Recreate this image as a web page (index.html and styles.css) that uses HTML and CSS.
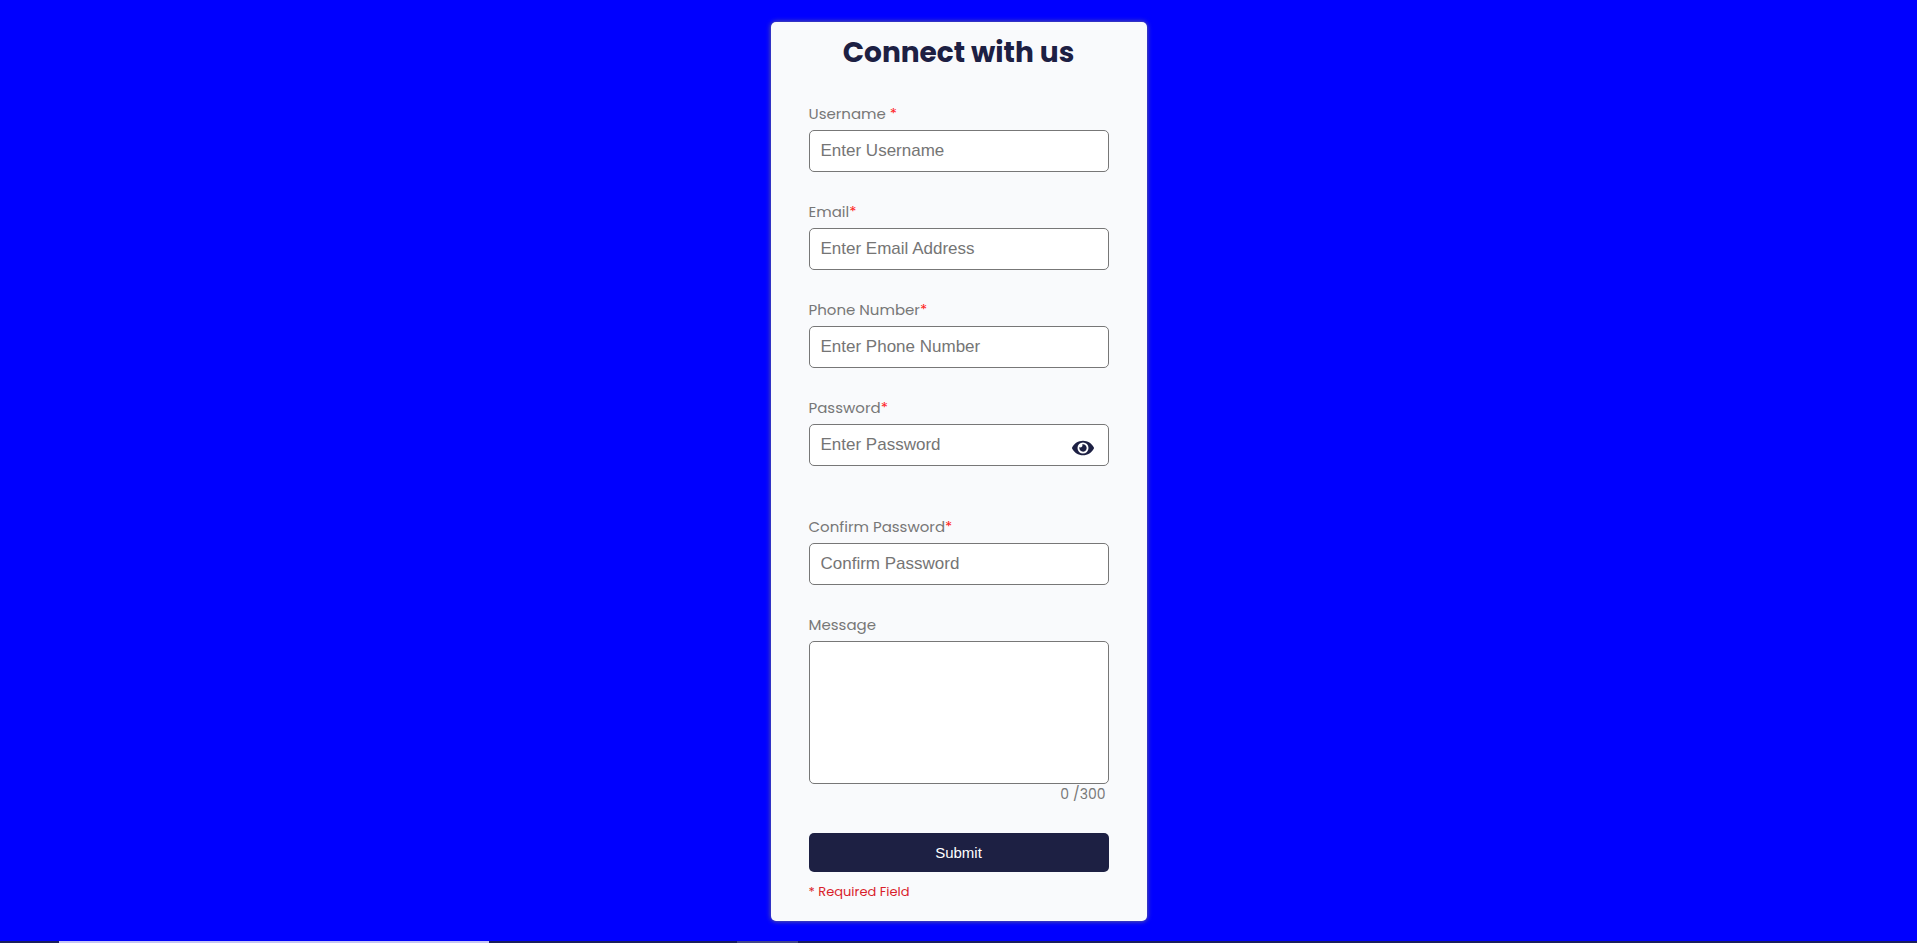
FILE: index.html
```html
<!DOCTYPE html>
<html lang="en">
<head>
  <meta charset="utf-8">
  <meta name="viewport" content="width=device-width, initial-scale=1">
  <title>Connect with us</title>
  <link rel="stylesheet" href="styles.css">
</head>
<body>
  <main class="page">
    <form class="card">
      <h1 class="title">Connect with us</h1>
      <div class="field">
        <label class="label" for="username">Username <span class="star">*</span></label>
        <input class="input" id="username" type="text" placeholder="Enter Username">
      </div>
      <div class="field">
        <label class="label" for="email">Email<span class="star">*</span></label>
        <input class="input" id="email" type="email" placeholder="Enter Email Address">
      </div>
      <div class="field">
        <label class="label" for="phone">Phone Number<span class="star">*</span></label>
        <input class="input" id="phone" type="tel" placeholder="Enter Phone Number">
      </div>
      <div class="field field-password">
        <label class="label" for="password">Password<span class="star">*</span></label>
        <div class="password-box">
          <input class="input" id="password" type="password" placeholder="Enter Password">
          <button class="toggle" type="button" aria-label="Show password">
            <svg class="eye" viewBox="0 0 576 512" aria-hidden="true"><path fill="currentColor" d="M572.52 241.4C518.29 135.59 410.93 64 288 64S57.68 135.64 3.48 241.41a32.35 32.35 0 0 0 0 29.19C57.71 376.41 165.07 448 288 448s230.32-71.64 284.52-177.41a32.35 32.35 0 0 0 0-29.19zM288 400a144 144 0 1 1 144-144 143.93 143.93 0 0 1-144 144zm0-240a95.31 95.31 0 0 0-25.31 3.79 47.85 47.85 0 0 1-66.9 66.9A95.78 95.78 0 1 0 288 160z"/></svg>
          </button>
        </div>
      </div>
      <div class="field">
        <label class="label" for="confirm">Confirm Password<span class="star">*</span></label>
        <input class="input" id="confirm" type="password" placeholder="Confirm Password">
      </div>
      <div class="field field-message">
        <label class="label" for="message">Message</label>
        <textarea class="input message" id="message" maxlength="300"></textarea>
        <p class="counter"><span>0</span><span>/300</span></p>
      </div>
      <button class="submit" type="submit">Submit</button>
      <p class="required">* Required Field</p>
    </form>
  </main>
  <footer class="taskbar">
    <span class="task task-active"></span>
    <span class="task task-open"></span>
  </footer>
</body>
</html>
```
FILE: styles.css
```css
* {
  box-sizing: border-box;
}

body {
  margin: 0;
  min-height: 100vh;
  display: flex;
  flex-direction: column;
  background: #0000ff;
  color: #777777;
  font-family: Poppins, Inter, sans-serif;
  font-size: 15px;
}

.page {
  flex: 1;
  display: flex;
  justify-content: center;
  align-items: flex-start;
  padding: 22px 0 20px;
}

.card {
  width: 376px;
  padding: 10px 38px 19px;
  border-radius: 5px;
  background: #f9fafc;
  box-shadow: 0 0 5px #777777;
}

.title {
  margin: 0 0 29px;
  color: #1d2043;
  font-size: 28px;
  font-weight: 700;
  line-height: 42px;
  text-align: center;
}

.field {
  display: flex;
  flex-direction: column;
  gap: 5px;
  margin-bottom: 29px;
}

.field-password {
  margin-bottom: 50px;
}

.label {
  line-height: 22px;
}

.star {
  color: #ff2222;
}

.input {
  width: 100%;
  height: 42px;
  padding: 0 11px;
  border: 1px solid #777777;
  border-radius: 5px;
  background: #ffffff;
  color: #333333;
  font-family: Arial, "Liberation Sans", sans-serif;
  font-size: 17px;
}

.input::placeholder {
  color: #757575;
}

.password-box {
  position: relative;
}

.toggle {
  position: absolute;
  top: 14px;
  right: 15px;
  display: flex;
  padding: 0;
  border: 0;
  background: none;
  color: #1d2043;
}

.eye {
  width: 22px;
  height: 20px;
}

.field-message {
  gap: 0;
  margin-bottom: 28px;
}

.message {
  height: 143px;
  margin-top: 5px;
  padding: 10px;
  resize: none;
}

.counter {
  display: flex;
  justify-content: flex-end;
  gap: 4px;
  margin: 0;
  padding-right: 3px;
  font-size: 14px;
  line-height: 21px;
}

.submit {
  width: 100%;
  height: 39px;
  padding: 0;
  border: 0;
  border-radius: 5px;
  background: #1d2043;
  color: #ffffff;
  font-family: Arial, "Liberation Sans", sans-serif;
  font-size: 15px;
}

.required {
  margin: 10px 0 0;
  color: #d91f2c;
  font-size: 13px;
  line-height: 20px;
}

.taskbar {
  display: flex;
  height: 2px;
  background: #1a1f5c;
}

.task {
  height: 2px;
}

.task-active {
  width: 430px;
  margin-left: 59px;
  background: #c4c4f4;
}

.task-open {
  width: 61px;
  margin-left: 248px;
  background: #424785;
}
```
